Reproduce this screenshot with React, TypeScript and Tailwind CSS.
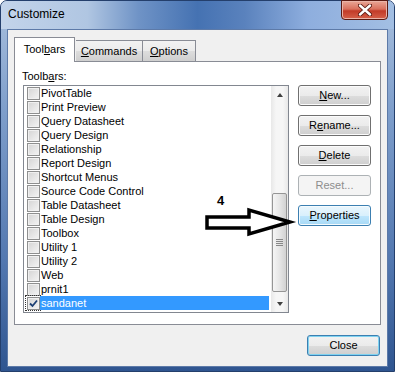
import React from 'react';

const items = [
  'PivotTable',
  'Print Preview',
  'Query Datasheet',
  'Query Design',
  'Relationship',
  'Report Design',
  'Shortcut Menus',
  'Source Code Control',
  'Table Datasheet',
  'Table Design',
  'Toolbox',
  'Utility 1',
  'Utility 2',
  'Web',
  'prnit1',
  'sandanet',
];

const font = { fontFamily: '"Liberation Sans", Arial, sans-serif' };

function Ul({ children }: { children: React.ReactNode }) {
  return <span className="underline underline-offset-[1px]">{children}</span>;
}

function CheckBox({ checked }: { checked?: boolean }) {
  return (
    <div className="flex h-[13px] w-[13px] items-center justify-center border border-[#8e8f8f] bg-[linear-gradient(135deg,#d4d4d4,#f4f4f4)] shadow-[inset_0_0_0_1px_#f0f0f0]">
      {checked && (
        <svg width="9" height="9" viewBox="0 0 9 9">
          <path d="M1 4.5 L3.5 7 L8 1.5" stroke="#1c3f74" strokeWidth="1.8" fill="none" />
        </svg>
      )}
    </div>
  );
}

function Row({ label, selected }: { label: string; selected?: boolean }) {
  return (
    <div className="flex h-[14px] items-center">
      <div
        className={
          'ml-[2px] flex h-[14px] w-[14px] items-center pl-px ' +
          (selected ? 'outline outline-1 outline-dotted outline-[#333]' : '')
        }
      >
        <CheckBox checked={selected} />
      </div>
      <span
        className={
          'mr-[2px] flex h-[14px] flex-1 items-center pl-px leading-[14px] ' +
          (selected ? 'bg-[#3399ff] text-white' : 'text-black')
        }
      >
        {label}
      </span>
    </div>
  );
}

function WinButton({
  children,
  variant = 'normal',
}: {
  children: React.ReactNode;
  variant?: 'normal' | 'hot' | 'disabled' | 'default';
}) {
  let cls =
    'border-[#707070] bg-[linear-gradient(#f2f2f2_0%,#ebebeb_50%,#dddddd_51%,#cfcfcf_100%)] text-black shadow-[inset_0_0_0_1px_#fbfbfb]';
  if (variant === 'hot')
    cls =
      'border-[#3c7fb1] bg-[linear-gradient(#eaf6fd_0%,#d9f0fc_50%,#bee6fd_51%,#a7d9f5_100%)] text-black shadow-[inset_0_0_0_1px_#f4fbfe]';
  if (variant === 'disabled') cls = 'border-[#adb2b5] bg-[#f4f4f4] text-[#8d8d8d]';
  if (variant === 'default')
    cls =
      'border-[#3c7fb1] bg-[linear-gradient(#f2f2f2_0%,#ebebeb_50%,#dddddd_51%,#cfcfcf_100%)] text-black shadow-[inset_0_0_0_1px_#7fd2f0]';
  return (
    <div
      className={
        'flex h-[21px] w-[73px] items-center justify-center rounded-[3px] border text-[11px] leading-[13px] ' +
        cls
      }
    >
      {children}
    </div>
  );
}

function ScrollBar() {
  return (
    <div className="flex h-full w-[17px] flex-col bg-[linear-gradient(to_right,#e8e8e8,#f6f6f6_30%,#f6f6f6_70%,#e8e8e8)]">
      <div className="flex h-[17px] items-center justify-center">
        <div className="h-0 w-0 border-x-[3.5px] border-b-[4px] border-x-transparent border-b-[#404040]" />
      </div>
      <div className="h-[90px]" />
      <div className="mx-px flex h-[99px] flex-col items-center justify-center gap-[1px] rounded-[2px] border border-[#959595] bg-[linear-gradient(to_right,#f5f5f5,#e6e6e6_50%,#d2d2d2)]">
        <div className="h-px w-[7px] bg-[#888]" />
        <div className="h-px w-[7px] bg-[#888]" />
        <div className="h-px w-[7px] bg-[#888]" />
        <div className="h-px w-[7px] bg-[#888]" />
      </div>
      <div className="flex-1" />
      <div className="flex h-[17px] items-center justify-center">
        <div className="h-0 w-0 border-x-[3.5px] border-t-[4px] border-x-transparent border-t-[#404040]" />
      </div>
    </div>
  );
}

export default function App() {
  return (
    <div className="relative h-[372px] w-[395px] bg-white" style={font}>
      <div className="flex h-full w-full flex-col rounded-t-[7px] border border-[#243f6c] bg-[linear-gradient(#a9c0de,#7e9ecb_30%,#5378b0_70%,#2f5590)] px-[6px] pb-[4px]">
        {/* title bar */}
        <div className="-mx-[6px] flex h-[28px] items-start justify-between rounded-t-[6px] bg-[linear-gradient(to_right,#c3d4ea_0%,#b0c6e2_22%,#6f93c6_35%,#4572b2_50%,#5a82bd_62%,#8eaede_78%,#a3bfe3_100%)] pl-[7px] pr-[6px]">
          <span className="pt-[6px] text-[12px] leading-[15px] text-black">Customize</span>
          <div className="-mt-px flex h-[20px] w-[47px] items-center justify-center rounded-b-[4px] border border-[#5b1a12] bg-[linear-gradient(#e9a797_0%,#d9705d_45%,#c23b28_55%,#d6614a_100%)] shadow-[inset_0_0_0_1px_#eab4a8]">
            <svg width="14" height="12" viewBox="0 0 14 12">
              <path d="M2 1.5 L12 10.5 M12 1.5 L2 10.5" stroke="#5a1a12" strokeWidth="4.2" strokeLinecap="round" />
              <path d="M2 1.5 L12 10.5 M12 1.5 L2 10.5" stroke="#ffffff" strokeWidth="2.4" strokeLinecap="round" />
            </svg>
          </div>
        </div>

        {/* client area */}
        <div className="flex flex-1 flex-col border border-[#5d7aa8] bg-[#f0f0f0] px-[6px] text-[11px]">
          {/* tabs */}
          <div className="mt-[7px] flex h-[24px] items-end">
            <div className="relative z-10 -mb-px flex h-[25px] w-[61px] items-center justify-center border-x border-t border-[#898c95] bg-white pb-[2px]">
              Tool<Ul>b</Ul>ars
            </div>
            <div className="ml-px flex h-[21px] w-[67px] items-center justify-center border-r border-t border-[#898c95] bg-[linear-gradient(#f2f2f2,#ebebeb_50%,#dddddd_51%,#cfcfcf)]">
              <Ul>C</Ul>ommands
            </div>
            <div className="flex h-[21px] w-[53px] items-center justify-center border-r border-t border-[#898c95] bg-[linear-gradient(#f2f2f2,#ebebeb_50%,#dddddd_51%,#cfcfcf)]">
              <Ul>O</Ul>ptions
            </div>
          </div>

          {/* tab panel */}
          <div className="flex h-[264px] border border-[#898c95] bg-white">
            <div className="ml-[8px] flex flex-col pt-[7px]">
              <div className="-ml-px h-[14px] leading-[14px]">
                Toolb<Ul>a</Ul>rs:
              </div>
              <div className="mt-[2px] flex h-[228px] w-[266px] border border-[#828790] bg-white">
                <div className="flex flex-1 flex-col">
                  {items.map((it) => (
                    <Row key={it} label={it} selected={it === 'sandanet'} />
                  ))}
                </div>
                <ScrollBar />
              </div>
            </div>
            <div className="ml-[9px] mt-[23px] flex flex-col gap-[9px]">
              <WinButton>
                <Ul>N</Ul>ew...
              </WinButton>
              <WinButton>
                R<Ul>e</Ul>name...
              </WinButton>
              <WinButton>
                <Ul>D</Ul>elete
              </WinButton>
              <WinButton variant="disabled">Reset...</WinButton>
              <WinButton variant="hot">
                <Ul>P</Ul>roperties
              </WinButton>
            </div>
          </div>

          {/* footer */}
          <div className="mt-[10px] flex justify-end pr-px">
            <WinButton variant="default">Close</WinButton>
          </div>
        </div>
      </div>

      {/* annotation arrow */}
      <span className="absolute left-[217px] top-[194px] text-[13px] font-bold leading-[14px] text-black">4</span>
      <svg className="absolute left-0 top-0" width="395" height="372" viewBox="0 0 395 372">
        <polygon
          points="207,217 249,217 249,210 290,222 249,234 249,228 207,228"
          fill="#ffffff"
          stroke="#000000"
          strokeWidth="3.5"
          strokeLinejoin="miter"
        />
      </svg>
    </div>
  );
}
